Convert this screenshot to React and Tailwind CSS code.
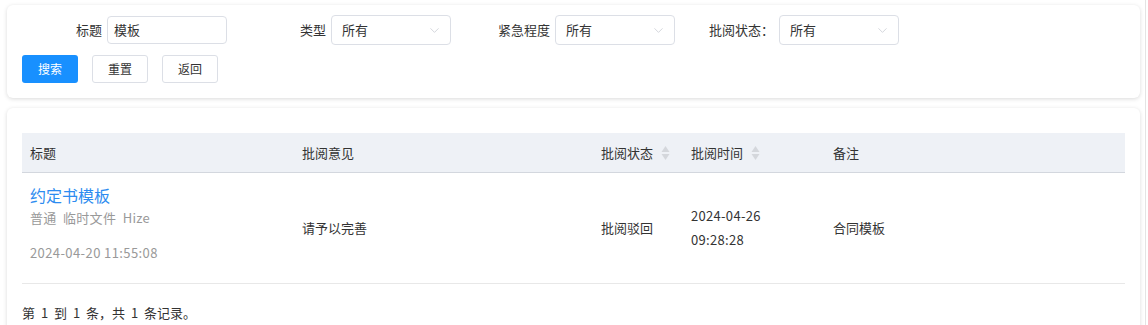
import { ChevronDown } from "lucide-react"

const font = { fontFamily: '"Noto Sans CJK SC", "Liberation Sans", sans-serif' }

function Field({ label, value, select }) {
    return (
        <div className="flex items-center w-[224px]">
            <label className="w-[85px] pr-[5px] text-right text-[13px] text-[#333]">{label}</label>
            {select ? (
                <div className="flex items-center justify-between w-[120px] h-[30px] pl-[10px] pr-[8px] border border-[#dcdfe6] rounded-[4px] text-[13px] text-[#333] bg-white">
                    <span>{value}</span>
                    <ChevronDown className="w-[15px] h-[15px] text-[#c0c4cc]" strokeWidth={1.1} />
                </div>
            ) : (
                <div className="flex items-center w-[120px] h-[28px] pl-[6px] border border-[#dcdfe6] rounded-[4px] text-[13px] text-[#333] bg-white">
                    {value}
                </div>
            )}
        </div>
    )
}

function SortIcon() {
    return (
        <svg width="9" height="16" viewBox="0 0 9 16" className="ml-[8px]">
            <path d="M4.5 1 L8.5 7 H0.5 Z" fill="#d4d7dc" />
            <path d="M4.5 15 L8.5 9 H0.5 Z" fill="#d4d7dc" />
        </svg>
    )
}

export default function App() {
    return (
        <div className="relative w-[1148px] h-[325px] overflow-hidden bg-white" style={font}>
            {/* right edge line */}
            <div className="absolute top-0 right-[2px] w-px h-full bg-[#e4e4e4]"></div>

            <div className="pl-[7px] pr-[8px] pt-[5px]">
                {/* Search card */}
                <div className="bg-white rounded-[6px] shadow-[0_1px_4px_rgba(0,0,0,0.15)] pl-[15px] pt-[10px] pb-[15px]">
                    <div className="flex items-center">
                        <Field label="标题" value="模板" />
                        <Field label="类型" value="所有" select />
                        <Field label="紧急程度" value="所有" select />
                        <Field label="批阅状态：" value="所有" select />
                    </div>
                    <div className="flex items-center gap-[14px] mt-[10px]">
                        <button className="w-[56px] h-[28px] rounded-[3px] bg-[#1890ff] text-white text-[12px]">搜索</button>
                        <button className="w-[56px] h-[28px] rounded-[3px] border border-[#dcdfe6] bg-white text-[#333] text-[12px]">重置</button>
                        <button className="w-[56px] h-[28px] rounded-[3px] border border-[#dcdfe6] bg-white text-[#333] text-[12px]">返回</button>
                    </div>
                </div>

                {/* Table card */}
                <div className="mt-[10px] bg-white rounded-[6px] shadow-[0_1px_4px_rgba(0,0,0,0.15)] px-[15px] pt-[25px] pb-[20px]">
                    <div className="grid grid-cols-[272px_299px_90px_142px_1fr] h-[40px] items-center bg-[#eef1f6] border-b border-[#d3d7de] text-[13px] text-[#333]">
                        <div className="pl-[8px]">标题</div>
                        <div className="pl-[8px]">批阅意见</div>
                        <div className="pl-[8px] flex items-center">批阅状态<SortIcon /></div>
                        <div className="pl-[8px] flex items-center">批阅时间<SortIcon /></div>
                        <div className="pl-[8px]">备注</div>
                    </div>
                    <div className="grid grid-cols-[272px_299px_90px_142px_1fr] h-[111px] items-center border-b border-[#e8e8e8] text-[13px] text-[#333]">
                        <div className="self-start pl-[8px] pt-[11px] flex flex-col">
                            <span className="text-[16px] leading-[22px] text-[#2d8cf0]">约定书模板</span>
                            <span className="mt-[2px] text-[13px] leading-[20px] text-[#999] tracking-[0.3px]">普通&nbsp;&nbsp;临时文件&nbsp;&nbsp;Hize</span>
                            <span className="mt-[15px] text-[13px] leading-[20px] text-[#999] tracking-[0.4px]">2024-04-20 11:55:08</span>
                        </div>
                        <div className="pl-[8px]">请予以完善</div>
                        <div className="pl-[8px]">批阅驳回</div>
                        <div className="pl-[8px] leading-[24px] tracking-[0.3px]">
                            <div>2024-04-26</div>
                            <div>09:28:28</div>
                        </div>
                        <div className="pl-[8px]">合同模板</div>
                    </div>
                    <div className="mt-[19px] text-[13px] leading-[20px] text-[#333] [word-spacing:3px]">第 1 到 1 条，共 1 条记录。</div>
                </div>
            </div>
        </div>
    )
}
